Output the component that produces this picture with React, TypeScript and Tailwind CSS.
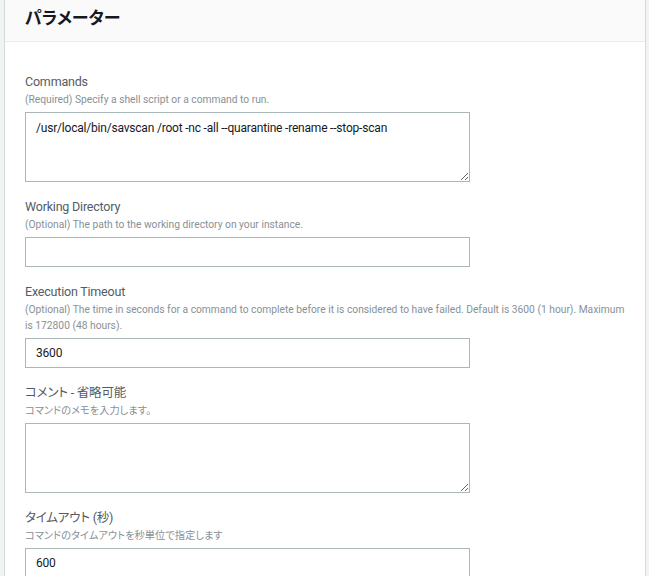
import { useState } from 'react';

type Field = {
    label: string;
    desc: string;
    kind: 'area' | 'input';
    value: string;
};

const fields: Field[] = [
    { label: 'Commands', desc: '(Required) Specify a shell script or a command to run.', kind: 'area', value: '/usr/local/bin/savscan /root -nc -all --quarantine -rename --stop-scan' },
    { label: 'Working Directory', desc: '(Optional) The path to the working directory on your instance.', kind: 'input', value: '' },
    { label: 'Execution Timeout', desc: '(Optional) The time in seconds for a command to complete before it is considered to have failed. Default is 3600 (1 hour). Maximum is 172800 (48 hours).', kind: 'input', value: '3600' },
    { label: 'コメント - 省略可能', desc: 'コマンドのメモを入力します。', kind: 'area', value: '' },
    { label: 'タイムアウト (秒)', desc: 'コマンドのタイムアウトを秒単位で指定します', kind: 'input', value: '600' },
];

const font = { fontFamily: 'Roboto, "Noto Sans CJK JP", sans-serif' };

function FormField({ field }: { field: Field }) {
    const [val, setVal] = useState(field.value);
    const box = "block w-[445px] border border-[#aab7b8] bg-white px-[10px] text-[12px] tracking-[-0.2px] text-[#16191f] outline-none";

    return (
        <div className="mb-[15px]">
            <div className="text-[12.5px] leading-[20px] tracking-[-0.2px] text-[#545b64]">{field.label}</div>
            <div className="text-[10.25px] leading-[16px] text-[#879196]">{field.desc}</div>
            {field.kind === 'area' ? (
                <textarea
                    value={val}
                    onChange={(e) => setVal(e.target.value)}
                    className={box + " mt-[4px] h-[70px] py-[5px] leading-[20px]"}
                />
            ) : (
                <input
                    value={val}
                    onChange={(e) => setVal(e.target.value)}
                    className={box + " mt-[4px] h-[30px]"}
                />
            )}
        </div>
    );
}

export default function App() {
    return (
        <div className="h-[576px] overflow-hidden bg-[#f2f3f3] pl-[4px] pr-[3px] [font-feature-settings:'palt']" style={font}>
            <div className="h-full border-x border-[#d5dbdb] bg-white">
                <div className="h-[42px] border-b border-[#eaeded] bg-[#fafafa] px-[20px] pt-[6px]">
                    <h2 className="text-[17px] font-bold leading-[24px] text-[#16191f]">パラメーター</h2>
                </div>
                <div className="px-[20px] pt-[30px]">
                    {fields.map((f) => (
                        <FormField key={f.label} field={f} />
                    ))}
                </div>
            </div>
        </div>
    );
}
